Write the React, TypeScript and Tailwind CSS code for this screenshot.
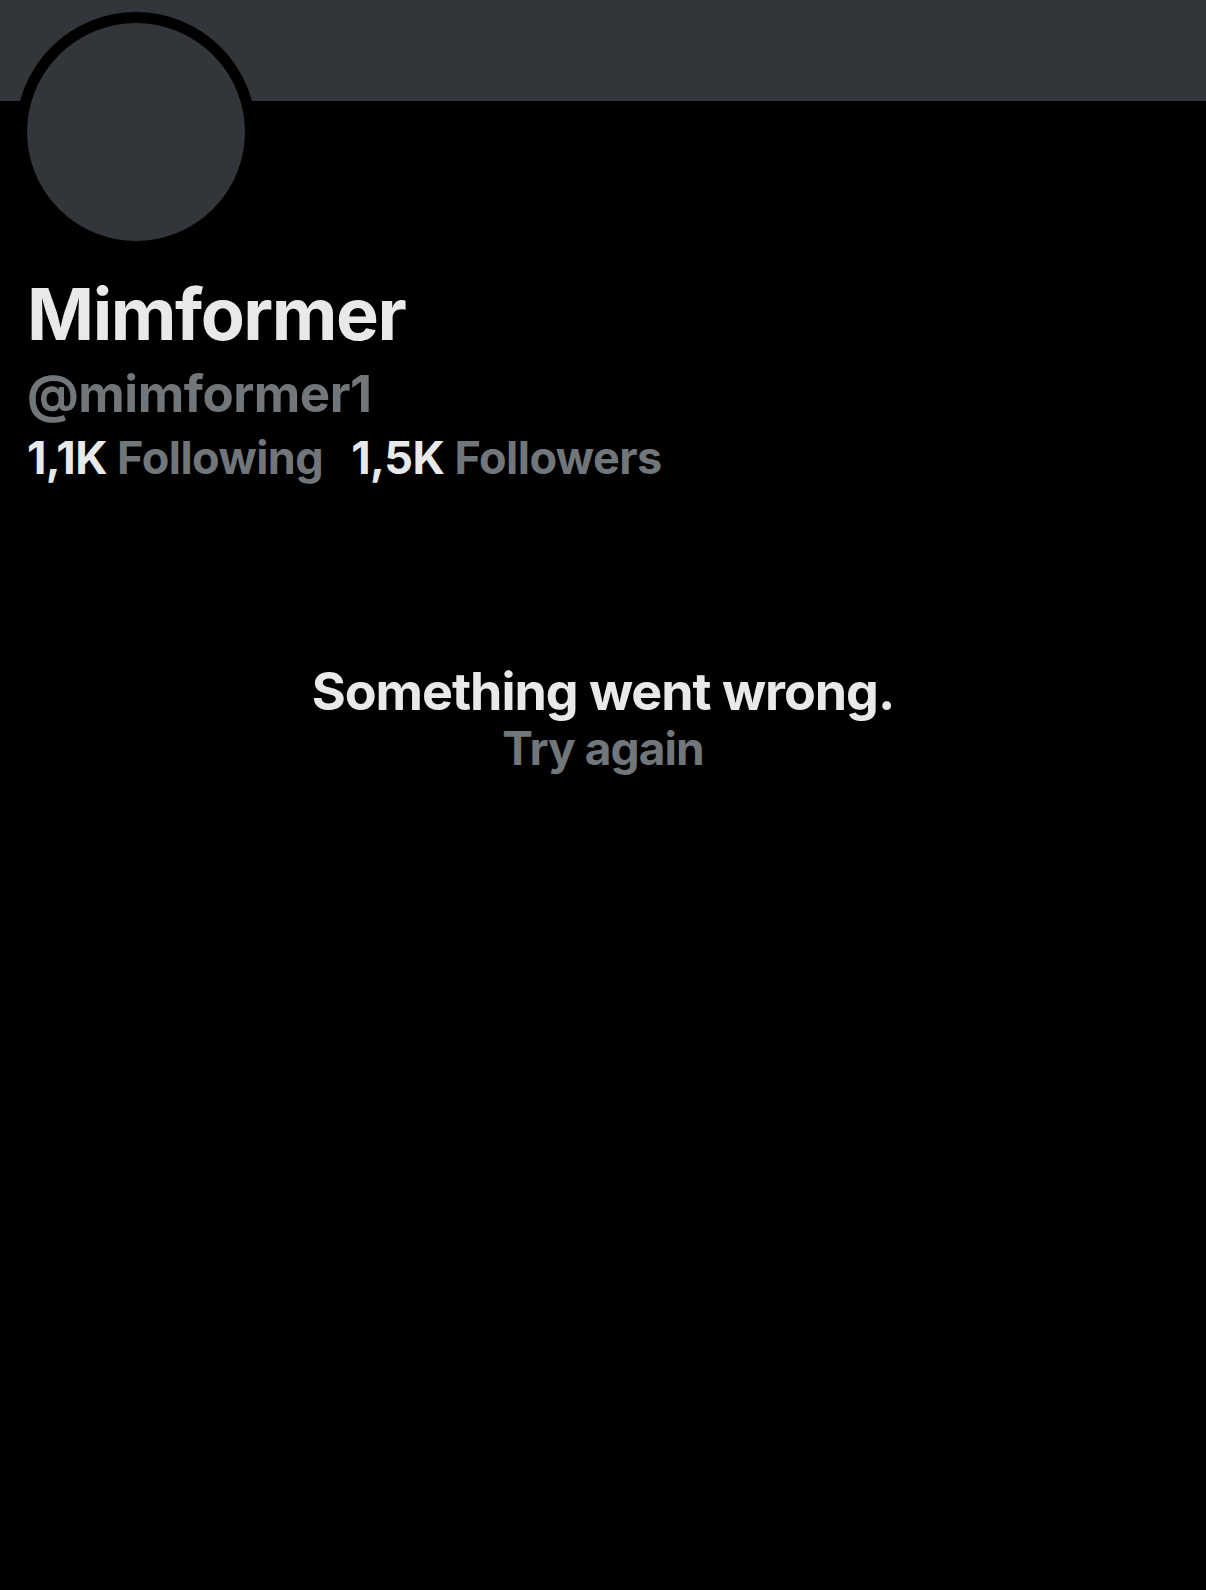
export default function App() {
  return (
    <div
      className="min-h-[1590px] w-full bg-black text-[#e7e9ea]"
      style={{ fontFamily: "Inter, 'Liberation Sans', sans-serif" }}
    >
      {/* banner */}
      <div className="h-[101px] bg-[#323539]" />

      {/* avatar */}
      <div className="-mt-[89px] ml-[16px] h-[240px] w-[240px] rounded-full border-[11px] border-black bg-[#323539]" />

      {/* profile info */}
      <div className="px-[27px] pt-[22px]">
        <div className="text-[72px] font-bold leading-[80px] tracking-[-0.02em]">Mimformer</div>
        <div className="mt-[10px] text-[51px] font-bold leading-[60px] tracking-[-0.01em] text-[#71767b]">@mimformer1</div>
        <div className="mt-[8px] flex items-baseline gap-[28px] text-[45px] font-bold leading-[52px] tracking-[-0.012em]">
          <span>
            <span className="text-[#e7e9ea]">1,1K</span> <span className="text-[#71767b]">Following</span>
          </span>
          <span>
            <span className="text-[#e7e9ea]">1,5K</span> <span className="text-[#71767b]">Followers</span>
          </span>
        </div>
      </div>

      {/* error */}
      <div className="mt-[178px] flex flex-col items-center">
        <div className="text-[52px] font-bold leading-[60px] tracking-[-0.02em]">Something went wrong.</div>
        <button className="mt-[-2px] text-[46px] font-bold leading-[56px] tracking-[-0.02em] text-[#71767b]">Try again</button>
      </div>
    </div>
  );
}
